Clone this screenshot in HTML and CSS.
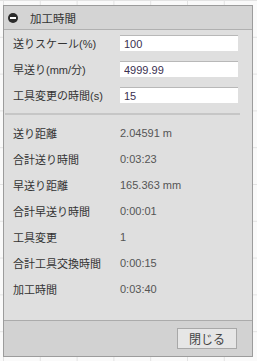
FILE: index.html
```html
<!DOCTYPE html>
<html lang="ja">
<head>
<meta charset="utf-8">
<link rel="stylesheet" href="styles.css">
</head>
<body>
<div class="dialog">
  <div class="header">
    <span class="collapse"></span>
    <span class="title">加工時間</span>
  </div>
  <div class="body">
    <div class="row">
      <span class="label">送りスケール(%)</span>
      <input class="field" type="text" value="100">
    </div>
    <div class="row">
      <span class="label">早送り(mm/分)</span>
      <input class="field" type="text" value="4999.99">
    </div>
    <div class="row">
      <span class="label">工具変更の時間(s)</span>
      <input class="field" type="text" value="15">
    </div>
    <div class="sep"></div>
    <div class="row"><span class="label">送り距離</span><span class="value">2.04591 m</span></div>
    <div class="row"><span class="label">合計送り時間</span><span class="value">0:03:23</span></div>
    <div class="row"><span class="label">早送り距離</span><span class="value">165.363 mm</span></div>
    <div class="row"><span class="label">合計早送り時間</span><span class="value">0:00:01</span></div>
    <div class="row"><span class="label">工具変更</span><span class="value">1</span></div>
    <div class="row"><span class="label">合計工具交換時間</span><span class="value">0:00:15</span></div>
    <div class="row"><span class="label">加工時間</span><span class="value">0:03:40</span></div>
  </div>
  <div class="footer">
    <button class="btn" type="button">閉じる</button>
  </div>
</div>
</body>
</html>
```

FILE: styles.css
```css
html, body {
  margin: 0;
  padding: 0;
  height: 100%;
}
body {
  background-color: #fafafa;
  background-image:
    linear-gradient(to right, #e3e3e3 1px, transparent 1px),
    linear-gradient(to bottom, #e3e3e3 1px, transparent 1px);
  background-size: 36.8px 36.8px;
  background-position: 3px 0;
  font-family: "Liberation Sans", "Noto Sans CJK JP", sans-serif;
  overflow: hidden;
}
.dialog {
  box-sizing: border-box;
  margin: 5px 0 0 3px;
  width: 250px;
  height: 352px;
  border: 1px solid #9c9c9c;
  background: #dfdfdf;
  display: flex;
  flex-direction: column;
}
.header {
  height: 23px;
  background: #d4d4d4;
  border-bottom: 1px solid #b0b0b0;
  display: flex;
  align-items: center;
  padding-left: 4px;
}
.collapse {
  position: relative;
  width: 10px;
  height: 10px;
  border-radius: 50%;
  background: #2b2b2b;
  margin-right: 12px;
}
.collapse::after {
  content: "";
  position: absolute;
  left: 2px;
  top: 4px;
  width: 6px;
  height: 2px;
  background: #ffffff;
}
.title {
  font-size: 11.5px;
  color: #333;
  font-family: "Noto Sans CJK JP", sans-serif;
}
.body {
  flex: 1;
  padding-top: 0;
}
.row {
  height: 26px;
  display: flex;
  align-items: center;
  padding-left: 9px;
}
.label {
  width: 107px;
  font-size: 11px;
  color: #333;
  font-family: "Liberation Sans", "Noto Sans CJK JP", sans-serif;
  white-space: nowrap;
}
.value {
  font-size: 11px;
  color: #555;
}
.field {
  box-sizing: border-box;
  width: 118px;
  height: 16px;
  margin: 0;
  padding: 0 4px;
  border: none;
  border-top: 1px solid #b8b8b8;
  background: #ffffff;
  font-family: "Liberation Sans", sans-serif;
  font-size: 11px;
  color: #3a3050;
  outline: none;
}
.sep {
  height: 2px;
  background: #c6c6c6;
  margin: 5px 12px 5px 1px;
}
.footer {
  height: 35px;
  border-top: 1px solid #ababab;
  background: #d2d2d2;
  display: flex;
  justify-content: flex-end;
  align-items: flex-start;
  padding-right: 15px;
}
.btn {
  box-sizing: border-box;
  margin-top: 7px;
  width: 60px;
  height: 21px;
  border: 1px solid #a8a8a8;
  background: #e6e6e6;
  font-family: "Noto Sans CJK JP", sans-serif;
  font-size: 12px;
  color: #444;
  padding: 0;
}
```
